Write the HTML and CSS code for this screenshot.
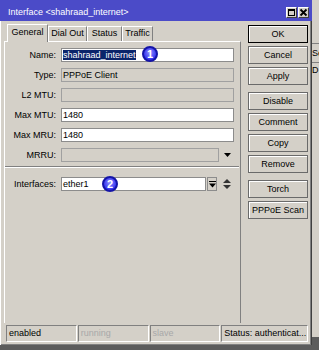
FILE: index.html
```html
<!DOCTYPE html>
<html lang="en">
<head>
  <meta charset="UTF-8">
  <title>Interface &lt;shahraad_internet&gt;</title>
  <link rel="stylesheet" href="styles.css">
</head>
<body>
  <div class="screen">
    <div class="window">
      <div class="titlebar">
        <span class="title">Interface &lt;shahraad_internet&gt;</span>
        <div class="tb-buttons">
          <span class="tb-btn">
            <svg width="9" height="9" viewBox="0 0 9 9"><rect x="1.5" y="1.5" width="6" height="6" fill="none" stroke="#000"/><rect x="1" y="1" width="7" height="2" fill="#000"/></svg>
          </span>
          <span class="tb-btn">
            <svg width="9" height="9" viewBox="0 0 9 9"><path d="M1.5 1.5 L7.5 7.5 M7.5 1.5 L1.5 7.5" stroke="#000" stroke-width="1.8"/></svg>
          </span>
        </div>
      </div>

      <div class="main">
        <div class="tabs-area">
          <div class="tabs">
            <span class="tab active w-general">General</span>
            <span class="tab w-dial">Dial Out</span>
            <span class="tab w-status">Status</span>
            <span class="tab w-traffic">Traffic</span>
          </div>
          <div class="panel">
            <div class="row">
              <label>Name:</label>
              <div class="input"><span class="sel">shahraad_internet</span><span class="marker m1">1</span></div>
            </div>
            <div class="row">
              <label>Type:</label>
              <div class="input disabled">PPPoE Client</div>
            </div>
            <div class="row">
              <label>L2 MTU:</label>
              <div class="input disabled"></div>
            </div>
            <div class="row">
              <label>Max MTU:</label>
              <div class="input">1480</div>
            </div>
            <div class="row">
              <label>Max MRU:</label>
              <div class="input">1480</div>
            </div>
            <div class="row">
              <label>MRRU:</label>
              <div class="input disabled short"></div>
              <svg class="drop" width="7" height="4" viewBox="0 0 7 4"><polygon points="0,0 7,0 3.5,4" fill="#000"/></svg>
            </div>
            <div class="sep"></div>
            <div class="row">
              <label>Interfaces:</label>
              <div class="input iface">ether1<span class="marker m2">2</span></div>
              <span class="combo-btn">
                <svg width="7" height="7" viewBox="0 0 7 7"><rect x="0" y="0" width="7" height="1" fill="#000"/><polygon points="0,2.5 7,2.5 3.5,6.5" fill="#000"/></svg>
              </span>
              <svg class="updown" width="8" height="12" viewBox="0 0 8 12"><polygon points="0,5 8,5 4,1" fill="#333"/><polygon points="0,7 8,7 4,11" fill="#333"/></svg>
            </div>
          </div>
        </div>

        <div class="side">
          <div class="btn default">OK</div>
          <div class="btn">Cancel</div>
          <div class="btn">Apply</div>
          <div class="btn gap">Disable</div>
          <div class="btn">Comment</div>
          <div class="btn">Copy</div>
          <div class="btn">Remove</div>
          <div class="btn gap">Torch</div>
          <div class="btn">PPPoE Scan</div>
        </div>
      </div>

      <div class="statusbar">
        <div class="seg s1">enabled</div>
        <div class="seg s2 muted">running</div>
        <div class="seg s3 muted">slave</div>
        <div class="seg s4">Status: authenticat...</div>
      </div>
    </div>

    <div class="behind">
      <div class="bh-head">Se</div>
      <div class="bh-row">D</div>
    </div>
  </div>
</body>
</html>
```

FILE: styles.css
```css
* {
  box-sizing: border-box;
}

html, body {
  margin: 0;
  padding: 0;
}

body {
  width: 319px;
  height: 350px;
  overflow: hidden;
  background-color: #5c5c5c;
  color: #000;
  font-family: 'Liberation Sans', Arial, sans-serif;
  font-size: 9px;
}

.screen {
  display: flex;
  height: 345px;
}

.window {
  width: 312px;
  height: 345px;
  display: flex;
  flex-direction: column;
  padding: 0 3px 3px 4px;
  background-color: #d4d0c8;
  border-right: 1px solid #404040;
  box-shadow: inset 1px 0 #fff, inset -1px 0 #808080, inset 0 -1px #808080;
}

/* title bar */

.titlebar {
  height: 21px;
  margin: 0 -4px 0 -4px;
  padding: 0 3px 3px 8px;
  display: flex;
  align-items: flex-end;
  background-color: #4b4bc8;
  color: #fff;
}

.title {
  flex: 1;
  line-height: 11px;
}

.tb-buttons {
  display: flex;
  gap: 1px;
}

.tb-btn {
  width: 11px;
  height: 11px;
  display: flex;
  align-items: center;
  justify-content: center;
  background-color: #d4d0c8;
  border: 1px solid;
  border-color: #fff #404040 #404040 #fff;
}

/* tabs + form */

.main {
  display: flex;
  height: 302px;
}

.tabs-area {
  width: 237px;
  padding-top: 3px;
  display: flex;
  flex-direction: column;
}

.tabs {
  height: 17px;
  padding-left: 3px;
  display: flex;
  align-items: flex-end;
  position: relative;
  z-index: 1;
}

.tab {
  height: 15px;
  line-height: 13px;
  text-align: center;
  border: 1px solid;
  border-bottom: none;
  border-color: #fff #808080 #808080 #fff;
}

.tab.active {
  height: 18px;
  margin-bottom: -1px;
  line-height: 15px;
  background-color: #d4d0c8;
}

.w-general { width: 41px; }
.w-dial { width: 39px; }
.w-status { width: 35px; }
.w-traffic { width: 31px; }

.panel {
  flex: 1;
  padding: 6px 6px 0 4px;
  border: 1px solid;
  border-bottom: none;
  border-color: #fff #808080 #808080 #fff;
}

.row {
  height: 14px;
  margin-bottom: 6px;
  display: flex;
  align-items: center;
}

.row label {
  width: 47px;
  margin-right: 5px;
  flex: none;
  text-align: right;
}

.input {
  flex: 1;
  height: 14px;
  padding-left: 1px;
  line-height: 12px;
  white-space: nowrap;
  position: relative;
  background-color: #fff;
  border: 1px solid #8c8c8c;
}

.input.disabled {
  background-color: #d4d0c8;
  border-color: #a0a0a0;
}

.input.short {
  flex: none;
  width: 158px;
}

.input.iface {
  flex: none;
  width: 145px;
}

.sel {
  background-color: #0a246a;
  color: #fff;
}

.drop {
  margin-left: 5px;
}

.combo-btn {
  width: 10px;
  height: 14px;
  margin-left: 1px;
  display: flex;
  align-items: center;
  justify-content: center;
  border: 1px solid #8c8c8c;
  background-color: #d4d0c8;
}

.updown {
  margin-left: 6px;
}

.sep {
  height: 2px;
  margin: -2px -5px 9px -4px;
  border-top: 1px solid #808080;
  border-bottom: 1px solid #fff;
}

/* numbered callouts */

.marker {
  position: absolute;
  width: 16px;
  height: 16px;
  border-radius: 50%;
  border: 2px solid #1414a8;
  background: radial-gradient(circle at 50% 40%, #9090ff, #3434f0 70%);
  color: #fff;
  font-weight: bold;
  font-size: 11px;
  line-height: 12px;
  text-align: center;
}

.m1 {
  left: 80px;
  top: -3px;
}

.m2 {
  left: 40px;
  top: -2px;
}

/* right buttons */

.side {
  width: 60px;
  margin-left: 7px;
  padding-top: 4px;
  display: flex;
  flex-direction: column;
  gap: 3px;
}

.btn {
  height: 18px;
  line-height: 16px;
  text-align: center;
  background-color: #d4d0c8;
  border: 1px solid #6a6a6a;
  box-shadow: inset 1px 1px #fff;
}

.btn.default {
  border-color: #000;
}

.btn.gap {
  margin-top: 4px;
}

/* status bar */

.statusbar {
  height: 17px;
  margin: 2px 0 0 2px;
  display: flex;
  gap: 1px;
}

.seg {
  padding-left: 2px;
  line-height: 15px;
  white-space: nowrap;
  overflow: hidden;
  border: 1px solid;
  border-color: #808080 #fff #fff #808080;
}

.s1, .s2, .s3 { width: 71px; }
.s4 { width: 87px; }

.seg.muted {
  color: #a8a8a8;
}

/* window behind */

.behind {
  width: 7px;
  height: 337px;
  padding-top: 43px;
  overflow: hidden;
  background-color: #d4d0c8;
  white-space: nowrap;
}

.bh-head {
  height: 20px;
  line-height: 18px;
  border-top: 1px solid #808080;
  border-bottom: 1px solid #808080;
}

.bh-row {
  line-height: 14px;
}
```
